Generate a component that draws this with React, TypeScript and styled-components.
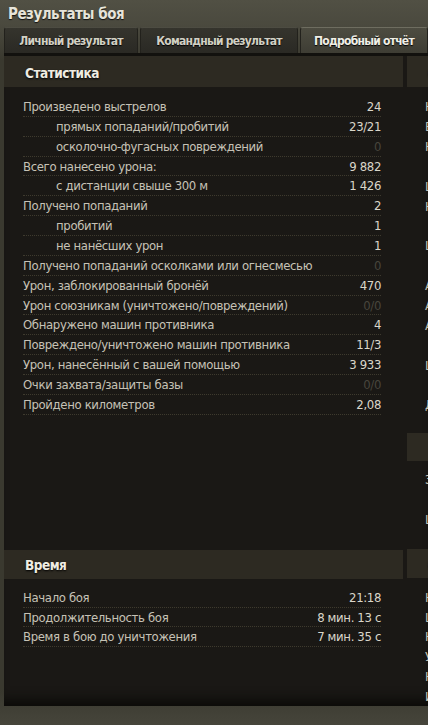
import React from "react";
import styled, { createGlobalStyle } from "styled-components";

const Global = createGlobalStyle`
  html, body { margin: 0; padding: 0; }
  body {
    width: 428px;
    height: 725px;
    overflow: hidden;
    background: #3d3c33;
    font-family: "DejaVu Sans Condensed", "Liberation Sans", sans-serif;
  }
`;

const Page = styled.div`
  width: 428px;
  height: 725px;
  overflow: hidden;
  display: flex;
  flex-direction: column;
  background: linear-gradient(180deg, #515044 0%, #4a493e 26px, #3a392f 60px, #3a392f 690px, #46453b 725px);
`;

const TitleBar = styled.div`
  height: 27px;
  display: flex;
  align-items: center;
  padding-left: 8px;
  color: #e6e4da;
  font-size: 15px;
  font-weight: bold;
  letter-spacing: -0.5px;
  text-shadow: 0 1px 1px #111;
  flex-shrink: 0;
`;

const Tabs = styled.div`
  height: 26px;
  display: flex;
  gap: 2px;
  padding-left: 4px;
  flex-shrink: 0;
`;

const Tab = styled.div<{ $active?: boolean; $w: number }>`
  width: ${(p) => p.$w}px;
  flex-shrink: 0;
  display: flex;
  align-items: center;
  justify-content: center;
  padding-top: 1px;
  font-size: 12px;
  font-weight: bold;
  letter-spacing: -0.75px;
  color: ${(p) => (p.$active ? "#f0eee6" : "#d2d0c4")};
  background: ${(p) =>
    p.$active
      ? "linear-gradient(180deg, #4d4c41, #3e3d34)"
      : "linear-gradient(180deg, #35342d, #2a2924)"};
  border-top: 1px solid ${(p) => (p.$active ? "#6e6d60" : "#4d4c42")};
  border-left: 1px solid #22211c;
  border-right: 1px solid #22211c;
  border-radius: 3px 3px 0 0;
  text-shadow: 0 1px 1px #000;
  box-sizing: border-box;
`;

const Body = styled.div`
  flex: 0 0 646px;
  margin-left: 4px;
  display: grid;
  grid-template-columns: 399px 1fr;
  column-gap: 4px;
  background: #1a1815;
  border-top: 3px solid #12110e;
  box-shadow: inset 0 -14px 12px -8px #0b0a08;
`;

const Column = styled.div`
  display: flex;
  flex-direction: column;
  min-width: 0;
  white-space: nowrap;
  overflow: hidden;
`;

const Header = styled.div<{ $top?: number; $h?: number }>`
  height: ${(p) => p.$h ?? 30}px;
  margin-top: ${(p) => p.$top ?? 0}px;
  background: #2d2a22;
  display: flex;
  align-items: center;
  padding: 2px 0 0 21px;
  box-sizing: border-box;
  color: #efece2;
  font-size: 13.5px;
  font-weight: bold;
  letter-spacing: -0.5px;
  text-shadow: 0 1px 2px #000;
  flex-shrink: 0;
`;

const Rows = styled.div<{ $top: number }>`
  display: flex;
  flex-direction: column;
  padding: ${(p) => p.$top}px 22px 0 19px;
`;

const Row = styled.div`
  height: 19.87px;
  box-sizing: border-box;
  display: flex;
  align-items: center;
  justify-content: space-between;
  border-bottom: 1px dotted #3e3a2e;
  font-size: 13px;
  letter-spacing: -0.35px;
  line-height: 1;
`;

const Label = styled.span<{ $indent?: boolean }>`
  color: #c6c2b6;
  padding-left: ${(p) => (p.$indent ? 33 : 0)}px;
`;

const Value = styled.span<{ $dim?: boolean }>`
  color: ${(p) => (p.$dim ? "#48453c" : "#dad6ca")};
`;

const SideRows = styled.div<{ $top: number }>`
  display: flex;
  flex-direction: column;
  padding: ${(p) => p.$top}px 0 0 18px;
`;

const SideRow = styled.div`
  height: 19.87px;
  display: flex;
  align-items: center;
  font-size: 13px;
  color: #c6c2b6;
`;

const SideBox = styled.div`
  height: 28px;
  margin: 18px 0 9px 0;
  background: #2d2a22;
  flex-shrink: 0;
`;

const stats: { l: string; v: string; i?: boolean; d?: boolean }[] = [
  { l: "Произведено выстрелов", v: "24" },
  { l: "прямых попаданий/пробитий", v: "23/21", i: true },
  { l: "осколочно-фугасных повреждений", v: "0", i: true, d: true },
  { l: "Всего нанесено урона:", v: "9 882" },
  { l: "с дистанции свыше 300 м", v: "1 426", i: true },
  { l: "Получено попаданий", v: "2" },
  { l: "пробитий", v: "1", i: true },
  { l: "не нанёсших урон", v: "1", i: true },
  { l: "Получено попаданий осколками или огнесмесью", v: "0", d: true },
  { l: "Урон, заблокированный бронёй", v: "470" },
  { l: "Урон союзникам (уничтожено/повреждений)", v: "0/0", d: true },
  { l: "Обнаружено машин противника", v: "4" },
  { l: "Повреждено/уничтожено машин противника", v: "11/3" },
  { l: "Урон, нанесённый с вашей помощью", v: "3 933" },
  { l: "Очки захвата/защиты базы", v: "0/0", d: true },
  { l: "Пройдено километров", v: "2,08" },
];

const times = [
  { l: "Начало боя", v: "21:18" },
  { l: "Продолжительность боя", v: "8 мин. 13 с" },
  { l: "Время в бою до уничтожения", v: "7 мин. 35 с" },
];

const side1 = ["Награда", "Взнос", "Нанесение", "", "Штраф", "Награда", "", "Штраф", "", "Автоматический", "Автоматическое", "Аренда", "", "Штраф", "", "Доход"];
const side2 = ["Завершение", "", "Штраф"];
const side3 = ["Награда", "Штраф", "Награда", "Уровень", "Награда", "Итого"];

export default function App() {
  return (
    <>
      <Global />
      <Page>
        <TitleBar>Результаты боя</TitleBar>
        <Tabs>
          <Tab $w={134}>Личный результат</Tab>
          <Tab $w={158}>Командный результат</Tab>
          <Tab $w={128} $active>
            Подробный отчёт
          </Tab>
        </Tabs>
        <Body>
          <Column>
            <Header $h={31}>Статистика</Header>
            <Rows $top={10}>
              {stats.map((s, k) => (
                <Row key={k}>
                  <Label $indent={s.i}>{s.l}</Label>
                  <Value $dim={s.d}>{s.v}</Value>
                </Row>
              ))}
            </Rows>
            <Header $top={135} $h={29}>Время</Header>
            <Rows $top={9}>
              {times.map((s, k) => (
                <Row key={k}>
                  <Label>{s.l}</Label>
                  <Value>{s.v}</Value>
                </Row>
              ))}
            </Rows>
          </Column>
          <Column>
            <Header $h={31}>Опыт</Header>
            <SideRows $top={10}>
              {side1.map((s, k) => (
                <SideRow key={k}>{s}</SideRow>
              ))}
            </SideRows>
            <SideBox />
            <SideRows $top={0}>
              {side2.map((s, k) => (
                <SideRow key={k}>{s}</SideRow>
              ))}
            </SideRows>
            <Header $top={20} $h={29}>Опыт</Header>
            <SideRows $top={9}>
              {side3.map((s, k) => (
                <SideRow key={k}>{s}</SideRow>
              ))}
            </SideRows>
          </Column>
        </Body>
      </Page>
    </>
  );
}
